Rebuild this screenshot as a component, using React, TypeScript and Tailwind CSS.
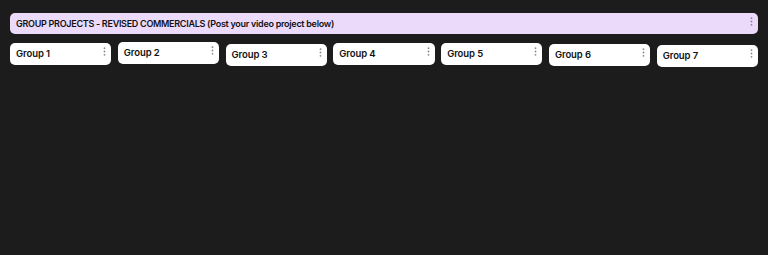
import React from 'react';

const GROUPS = [
  { name: 'Group 1', offset: 'mt-[1px]' },
  { name: 'Group 2', offset: 'mt-0' },
  { name: 'Group 3', offset: 'mt-[2px]' },
  { name: 'Group 4', offset: 'mt-[1px]' },
  { name: 'Group 5', offset: 'mt-[1px]' },
  { name: 'Group 6', offset: 'mt-[2px]' },
  { name: 'Group 7', offset: 'mt-[3px]' },
];

function Dots() {
  return (
    <svg width="3" height="9" viewBox="0 0 3 9" className="shrink-0 text-[#8a8a8a]">
      <circle cx="1.5" cy="1.2" r="0.9" fill="currentColor" />
      <circle cx="1.5" cy="4.5" r="0.9" fill="currentColor" />
      <circle cx="1.5" cy="7.8" r="0.9" fill="currentColor" />
    </svg>
  );
}

export default function App() {
  return (
    <main className="w-[768px] h-[255px] bg-[#1c1c1c] px-[10px] pt-[13px] font-['Inter',sans-serif] text-[#111]">
      <header className="h-[21px] rounded-[5px] bg-[#ecdafb] flex items-start justify-between pl-[6px] pr-[5px]">
        <h1 className="text-[9px] leading-[21px] font-semibold tracking-[-0.28px]">
          GROUP PROJECTS - REVISED COMMERCIALS (Post your video project below)
        </h1>
        <div className="pt-[4px]"><Dots /></div>
      </header>

      <section className="grid grid-cols-7 gap-x-[6.5px] items-start mt-[8px]">
        {GROUPS.map(g => (
          <div key={g.name} className={`${g.offset} h-[22px] rounded-[5px] bg-white flex items-start justify-between pl-[6px] pr-[5px]`}>
            <span className="text-[9.5px] leading-[22px] font-semibold tracking-[-0.1px]">{g.name}</span>
            <div className="pt-[4px]"><Dots /></div>
          </div>
        ))}
      </section>
    </main>
  );
}
